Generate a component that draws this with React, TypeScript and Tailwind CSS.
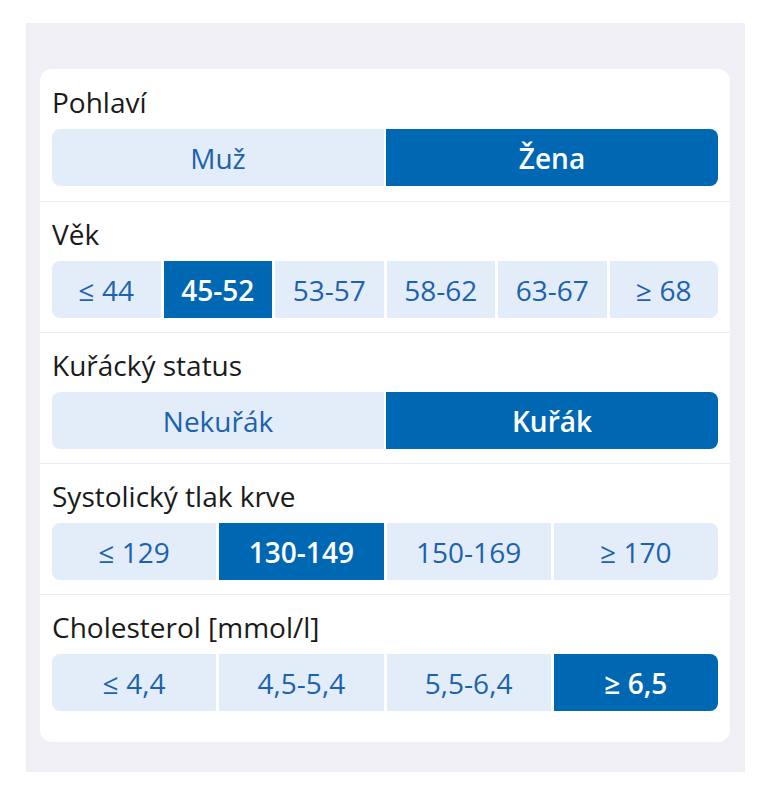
import React from "react";

type Group = {
  label: string;
  options: string[];
  selected: number;
  gap: string;
};

const groups: Group[] = [
  { label: "Pohlaví", options: ["Muž", "Žena"], selected: 1, gap: "gap-[2px]" },
  { label: "Věk", options: ["≤ 44", "45-52", "53-57", "58-62", "63-67", "≥ 68"], selected: 1, gap: "gap-[3px]" },
  { label: "Kuřácký status", options: ["Nekuřák", "Kuřák"], selected: 1, gap: "gap-[2px]" },
  { label: "Systolický tlak krve", options: ["≤ 129", "130-149", "150-169", "≥ 170"], selected: 1, gap: "gap-[3px]" },
  { label: "Cholesterol [mmol/l]", options: ["≤ 4,4", "4,5-5,4", "5,5-6,4", "≥ 6,5"], selected: 3, gap: "gap-[3px]" },
];

function Segmented({ options, selected, gap }: { options: string[]; selected: number; gap: string }) {
  return (
    <div className={`flex h-[57px] overflow-hidden rounded-lg ${gap}`}>
      {options.map((opt, i) => (
        <div
          key={opt}
          className={
            i === selected
              ? "flex flex-1 items-center justify-center bg-[#0068b3] text-[28px] font-semibold text-white"
              : "flex flex-1 items-center justify-center bg-[#e3edf9] text-[28px] text-[#1c62ad]"
          }
        >
          {opt}
        </div>
      ))}
    </div>
  );
}

export default function App() {
  return (
    <div className="min-h-[800px] bg-white pl-[26px] pt-[23px] font-['Open_Sans',sans-serif]">
      <div className="w-[719px] bg-[#efeff5] pl-[14px] pr-[15px] pt-[46px] pb-[30px]">
        <div className="rounded-xl bg-white pb-[17px]">
          {groups.map((g, i) => (
            <section
              key={g.label}
              className={i === 0 ? "px-3 pt-[16px] pb-[15px]" : "border-t border-[#ebebf0] px-3 pt-[15px] pb-[14px]"}
            >
              <div className="mb-[10px] text-[28px] leading-[34px] text-[#1a1a1a]">{g.label}</div>
              <Segmented options={g.options} selected={g.selected} gap={g.gap} />
            </section>
          ))}
        </div>
      </div>
    </div>
  );
}
